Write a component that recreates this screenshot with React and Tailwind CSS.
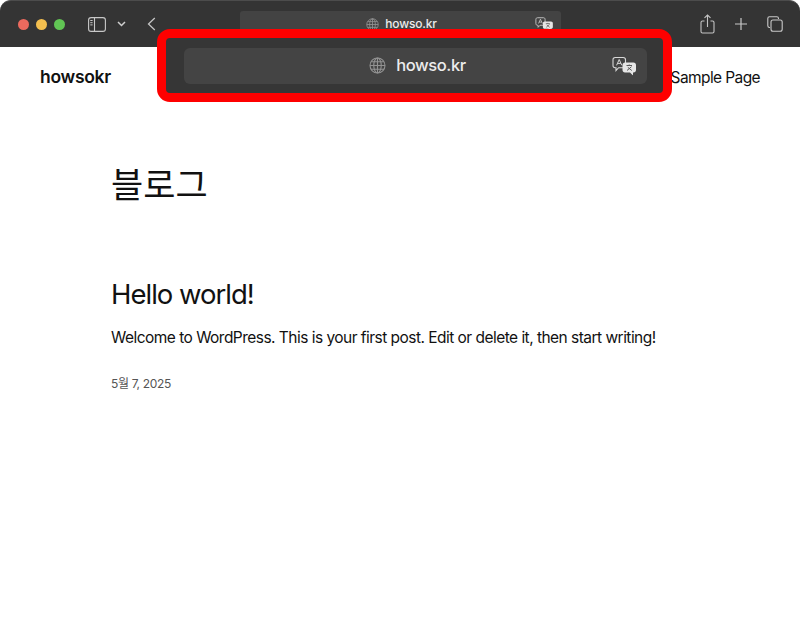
import React from "react";

const font = "font-['Inter','Noto_Sans_CJK_KR',sans-serif]";

const GlobeIcon = ({ size }) => (
  <svg width={size} height={size} viewBox="0 0 20 20" fill="none" stroke="#929292" strokeWidth="1.3">
    <circle cx="10" cy="10" r="8.8" />
    <ellipse cx="10" cy="10" rx="4.4" ry="8.8" />
    <path d="M10 1.2V18.8M1.2 10H18.8M2.6 5.6H17.4M2.6 14.4H17.4" />
  </svg>
);

const TranslateIcon = ({ width, height }) => (
  <svg width={width} height={height} viewBox="0 0 24 19" fill="none">
    <path
      d="M3.2 1H11.2C12.6 1 13.5 1.9 13.5 3.2V9C13.5 10.4 12.6 11.2 11.2 11.2H6.6L4 14V11.2H3.2C1.9 11.2 1 10.4 1 9V3.2C1 1.9 1.9 1 3.2 1Z"
      stroke="#d8d8d8"
      strokeWidth="1.1"
    />
    <path d="M4.6 8.8L7.2 3L9.8 8.8M5.6 6.9H8.8" stroke="#d8d8d8" strokeWidth="1" />
    <path
      d="M13 6H21.5C23 6 24 7 24 8.5V13.5C24 15 23 16 21.5 16H21V19L18 16H13C11.5 16 10.5 15 10.5 13.5V8.5C10.5 7 11.5 6 13 6Z"
      fill="#e6e6e6"
    />
    <path d="M14.5 9H20M17.2 8V9M15 14L19.5 10.2M15.8 10.8L19.8 14" stroke="#5a5a5a" strokeWidth="1" />
  </svg>
);

const AddressBar = ({ className, textClass, globe, gap, offset, trWidth, trHeight, trRight }) => (
  <div className={`relative flex items-center justify-center ${className}`}>
    <div className={`flex items-center ${gap} ${offset}`}>
      <GlobeIcon size={globe} />
      <span className={`${font} font-medium text-[#ececec] ${textClass}`}>howso.kr</span>
    </div>
    <div className={`absolute top-1/2 -translate-y-1/2 ${trRight}`}>
      <TranslateIcon width={trWidth} height={trHeight} />
    </div>
  </div>
);

const App = () => {
  return (
    <div className={`relative h-[617px] w-[800px] overflow-hidden bg-white ${font}`}>
      {/* Browser toolbar */}
      <div className="flex h-[47px] items-center rounded-t-[11px] border-t border-[#4c4c4c] bg-[#343434]">
        <div className="ml-[18px] flex gap-[7px]">
          <div className="h-[11px] w-[11px] rounded-full bg-[#ec6a5e]" />
          <div className="h-[11px] w-[11px] rounded-full bg-[#f4bf4f]" />
          <div className="h-[11px] w-[11px] rounded-full bg-[#61c554]" />
        </div>
        <svg className="ml-[23px]" width="18" height="15" viewBox="0 0 18 15" fill="none" stroke="#c8c8c8" strokeWidth="1.1">
          <rect x="0.6" y="0.6" width="16.8" height="13.8" rx="2.5" />
          <path d="M6.5 0.6V14.4" />
          <path d="M2.3 3.5H4.6M2.3 5.7H4.6M2.3 7.9H4.6" strokeWidth="1" />
        </svg>
        <svg className="ml-[11px]" width="9" height="6" viewBox="0 0 9 6" fill="none" stroke="#d0d0d0" strokeWidth="1.5">
          <path d="M1 1L4.5 4.5L8 1" />
        </svg>
        <svg className="ml-[21px]" width="9" height="14" viewBox="0 0 9 14" fill="none" stroke="#c4c4c4" strokeWidth="1.3">
          <path d="M7.8 1L1.5 7L7.8 13" />
        </svg>
        <AddressBar
          className="ml-[84px] mt-[10px] h-[26px] w-[321px] self-start rounded-[3px] bg-[#434343]"
          textClass="text-[12px] tracking-[-0.2px]"
          globe={13}
          gap="gap-[6px]"
          offset="ml-[2px]"
          trWidth={18}
          trHeight={14}
          trRight="right-[8px]"
        />
        <div className="ml-auto mr-[17px] flex items-center gap-[18px]">
          <svg className="mr-[1px]" width="15" height="20" viewBox="0 0 15 20" fill="none" stroke="#c4c4c4" strokeWidth="1.1">
            <path d="M4.5 7H2.5C1.5 7 1 7.6 1 8.5V17.5C1 18.5 1.5 19 2.5 19H12.5C13.5 19 14 18.5 14 17.5V8.5C14 7.6 13.5 7 12.5 7H10.5" />
            <path d="M7.5 13V1M4.5 3.8L7.5 1L10.5 3.8" />
          </svg>
          <svg className="mr-[1px]" width="14" height="14" viewBox="0 0 14 14" fill="none" stroke="#c8c8c8" strokeWidth="1.2">
            <path d="M7 1V13M1 7H13" />
          </svg>
          <svg width="16" height="16" viewBox="0 0 16 16" fill="none" stroke="#c8c8c8" strokeWidth="1.1">
            <path d="M3 11.5H2.5C1.4 11.5 0.8 10.8 0.8 9.8V2.5C0.8 1.4 1.4 0.8 2.5 0.8H9.8C10.8 0.8 11.5 1.4 11.5 2.5V3" />
            <rect x="4" y="4" width="11.2" height="11.2" rx="2" />
          </svg>
        </div>
      </div>

      {/* Site header */}
      <header className="flex h-[60px] items-center justify-between px-10 text-[#111]">
        <span className="mt-[1px] text-[17.5px] font-semibold tracking-[-0.3px]">howsokr</span>
        <span className="mt-[2px] text-[15.5px] tracking-[-0.6px]">Sample Page</span>
      </header>

      {/* Post list */}
      <main className="px-[111px] text-[#111]">
        <h1 className="mt-[54px] text-[35px] leading-[48px] font-normal">블로그</h1>
        <h2 className="mt-[65px] text-[27.5px] leading-[40px] font-normal tracking-[-1px]">Hello world!</h2>
        <p className="mt-[11px] text-[15.5px] leading-[26px] tracking-[-0.53px]">
          Welcome to WordPress. This is your first post. Edit or delete it, then start writing!
        </p>
        <p className="mt-[23px] text-[12px] leading-[20px] tracking-[-0.35px] text-[#555]">5월 7, 2025</p>
      </main>

      {/* Highlight box over the address bar */}
      <div className="absolute left-[157px] top-[29px] flex h-[73px] w-[515px] items-center justify-center rounded-[13px] border-[9px] border-[#fe0000] bg-[#363636] pl-[2px]">
        <AddressBar
          className="h-[36px] w-[463px] rounded-[6px] bg-[#444444]"
          textClass="text-[16.5px] tracking-[-0.42px]"
          globe={17}
          gap="gap-[10px]"
          offset="ml-[4px]"
          trWidth={24}
          trHeight={19}
          trRight="right-[11px]"
        />
      </div>
    </div>
  );
};

export default App;
